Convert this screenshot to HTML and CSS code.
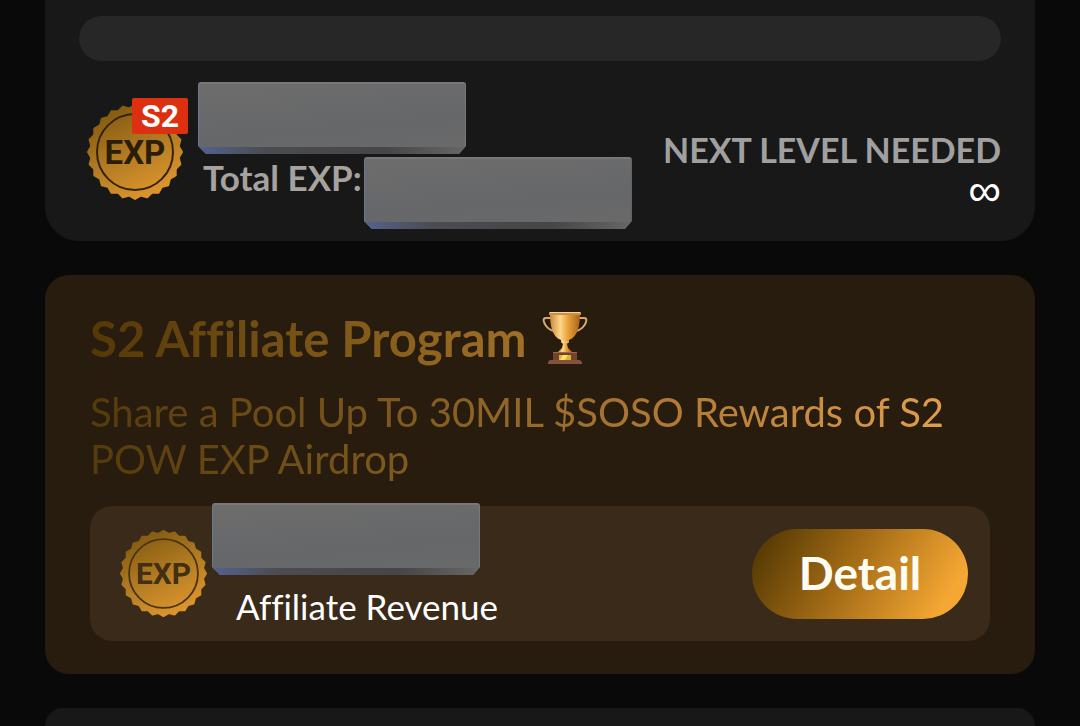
FILE: index.html
```html
<!DOCTYPE html>
<html lang="en"><head>
  <meta charset="UTF-8">
  <meta name="viewport" content="width=device-width,initial-scale=1.0">
  <title>S2 Affiliate Program</title>
  <link rel="stylesheet" href="styles.css">
</head><body>
<main id="page">
  <section class="card level">
    <div class="track"></div>
    <div class="exp-row">
      <div class="badge">
        <svg class="seal" viewBox="0 0 96 96" role="img" aria-label="EXP">
          <defs>
            <linearGradient id="gold" gradientUnits="userSpaceOnUse" x1="20" y1="4" x2="62" y2="92">
              <stop offset="0" stop-color="#80580f"/>
              <stop offset=".5" stop-color="#b07a22"/>
              <stop offset="1" stop-color="#dc952d"/>
            </linearGradient>
            <!-- four hexagons turned by 15deg = 24 teeth -->
            <path id="teeth" d="M95 48L71.5 88.7L24.5 88.7L1 48L24.5 7.3L71.5 7.3Z
              M93.4 60.2L60.2 93.4L14.8 81.2L2.6 35.8L35.8 2.6L81.2 14.8Z
              M88.7 71.5L48 95L7.3 71.5L7.3 24.5L48 1L88.7 24.5Z
              M81.2 81.2L35.8 93.4L2.6 60.2L14.8 14.8L60.2 2.6L93.4 35.8Z"/>
          </defs>
          <use href="#teeth" class="teeth"/>
          <circle class="ring" cx="48" cy="48" r="38"/>
          <text x="48" y="60" class="seal-text">EXP</text>
        </svg>
        <span class="season">S2</span>
      </div>
      <div class="totals">
        <div class="block"></div>
        <div class="total">
          <span>Total EXP:</span>
          <div class="block"></div>
        </div>
      </div>
      <div class="next">
        <div class="next-label">NEXT LEVEL NEEDED</div>
        <div class="next-value">∞</div>
      </div>
    </div>
  </section>

  <section class="card affiliate">
    <h2><span class="gold-text">S2 Affiliate Program</span>
      <svg class="trophy" viewBox="0 0 46 54" aria-hidden="true">
        <defs>
          <linearGradient id="cup" x1="0" y1="0" x2="1" y2="0">
            <stop offset="0" stop-color="#c98a3a"/>
            <stop offset=".35" stop-color="#ffd68a"/>
            <stop offset=".6" stop-color="#e9a03a"/>
            <stop offset="1" stop-color="#a9631a"/>
          </linearGradient>
        </defs>
        <path d="M9 7H4C2 7 1 8 2 11C3 15 7 19 12 20M37 7H42C44 7 45 8 44 11C43 15 39 19 34 20" fill="none" stroke="#d3aa70" stroke-width="2"/>
        <path d="M8 2H38C38 14 36 26 27 29L26 31H20L19 29C10 26 8 14 8 2Z" fill="url(#cup)"/>
        <path d="M7 1H39V4H7Z" fill="#c98f42"/>
        <path d="M8 1H38V2H8Z" fill="#f6d49a"/>
        <path d="M19 29H27V31L25 33L26 37L30 41H16L20 37L21 33L19 31Z" fill="url(#cup)"/>
        <path d="M19 31H27" stroke="#f3cf90" stroke-width="1"/>
        <path d="M11 41H35V49H11Z" fill="#70422f"/>
        <path d="M11 41H35V42H11Z" fill="#99654c"/>
        <path d="M8 49H38L40 51V53H6V51Z" fill="#85503c"/>
        <path d="M17 44H29V49H17Z" fill="#e0b32c"/>
        <path d="M18 49L21 44H26L23 49Z" fill="#f6e070"/>
      </svg>
    </h2>
    <p class="gold-text">Share a Pool Up To 30MIL $SOSO Rewards of S2 POW EXP Airdrop</p>
    <div class="revenue">
      <svg class="seal small" viewBox="0 0 96 96" role="img" aria-label="EXP">
        <use href="#teeth" class="teeth"/>
        <circle class="ring" cx="48" cy="48" r="38"/>
        <text x="48" y="60" class="seal-text">EXP</text>
      </svg>
      <div class="revenue-text">
        <div class="block over"></div>
        <span>Affiliate Revenue</span>
      </div>
      <button type="button">Detail</button>
    </div>
  </section>

  <section class="card following"></section>
</main>
</body>
</html>
```
FILE: styles.css
```css
html,body{
  height:100%;
  margin:0;
}
body{
  background-color:#090909;
  color:#fff;
  font-family:Lato,"Liberation Sans",sans-serif;
  font-variant-ligatures:none;
}
#page{
  display:flex;
  flex-direction:column;
  gap:34px;
  min-height:100%;
  box-sizing:border-box;
  padding:0 45px;
}
.card{
  background-color:#181818;
  border-radius:24px;
}

/* level */
.level{
  border-radius:0 0 34px 34px;
  padding:16px 34px 12px;
}
.track{
  height:45px;
  border-radius:23px;
  background-color:#272727;
}
.exp-row{
  display:flex;
  align-items:flex-start;
  margin-top:21px;
}
.badge{
  position:relative;
  flex:none;
  width:111px;
  margin-top:22px;
  padding-left:8px;
  box-sizing:border-box;
}
.seal{
  display:block;
  flex:none;
  width:96px;
  height:96px;
}
.teeth{
  fill:url(#gold);
  stroke:url(#gold);
  stroke-width:2;
  stroke-linejoin:round;
}
.ring{
  fill:none;
  stroke:#33240a;
  stroke-width:2;
}
.seal-text{
  font:700 33px Roboto,sans-serif;
  fill:#2b1e09;
  text-anchor:middle;
}
.small .ring{
  stroke:#4a3413;
}
.small .seal-text{
  fill:#432f13;
}
.season{
  position:absolute;
  top:-6px;
  right:2px;
  width:56px;
  border-radius:2px;
  background-color:#dc3010;
  font:700 32px/36px Roboto,sans-serif;
  text-align:center;
}
.totals{
  flex:1;
  padding-left:8px;
}
.block{
  box-sizing:border-box;
  flex:none;
  width:268px;
  height:72px;
  background:
    linear-gradient(90deg,#53618f,#4b4c50 25%,#464648 70%,#666) bottom/100% 7px no-repeat,
    linear-gradient(175deg,#6d6d6e,#666768 60%,#6a6a6b);
  border:1px solid #77787c;
  border-width:2px 1px 0;
  border-left-color:#6c7594;
  border-radius:3px;
  clip-path:polygon(0 0,100% 0,100% 64px,261px 100%,8px 100%,0 64px);
}
.total{
  display:flex;
  gap:2px;
  margin-top:3px;
  padding-left:5px;
  color:#a5a29f;
  font-size:35px;
  font-weight:700;
  line-height:40px;
}
.next{
  padding-top:48px;
  text-align:right;
}
.next-label{
  color:#a0a0a0;
  font-size:34px;
  font-weight:700;
  line-height:40px;
}
.next-value{
  font-family:"Liberation Sans",sans-serif;
  font-size:46px;
  line-height:40px;
}

/* affiliate */
.affiliate{
  padding:34px 45px 33px;
  background-color:#271c0d;
}
.gold-text{
  background:linear-gradient(90deg,#543a0c,#805a20 35%,#b17b36 65%,#e8a352);
  -webkit-background-clip:text;
  background-clip:text;
  color:transparent;
}
h2{
  display:flex;
  align-items:center;
  gap:15px;
  margin:0;
  font-size:49px;
  line-height:58px;
}
h2 .gold-text{
  background-image:linear-gradient(90deg,#543806,#a07028);
}
.trophy{
  width:46px;
  height:54px;
}
p{
  margin:22px 0 0;
  font-size:40px;
  line-height:47px;
}
.revenue{
  display:flex;
  align-items:center;
  box-sizing:border-box;
  min-height:135px;
  margin-top:23px;
  padding:0 22px 0 30px;
  border-radius:22px;
  background-color:#392a1a;
}
.small{
  width:87px;
  height:87px;
}
.revenue-text{
  position:relative;
  flex:1;
  align-self:stretch;
  display:flex;
  align-items:flex-end;
  padding:0 0 15px 29px;
  font-size:35px;
  line-height:40px;
}
.over{
  position:absolute;
  top:-3px;
  left:5px;
}
button{
  width:216px;
  height:90px;
  padding:0 0 2px;
  border:none;
  border-radius:45px;
  background:linear-gradient(120deg,#5a3d04 8%,#a46c16 45%,#f5a733 88%);
  color:#fffdf2;
  font:700 46px Lato,sans-serif;
}
.following{
  flex:1;
  border-radius:24px 24px 0 0;
}
```
